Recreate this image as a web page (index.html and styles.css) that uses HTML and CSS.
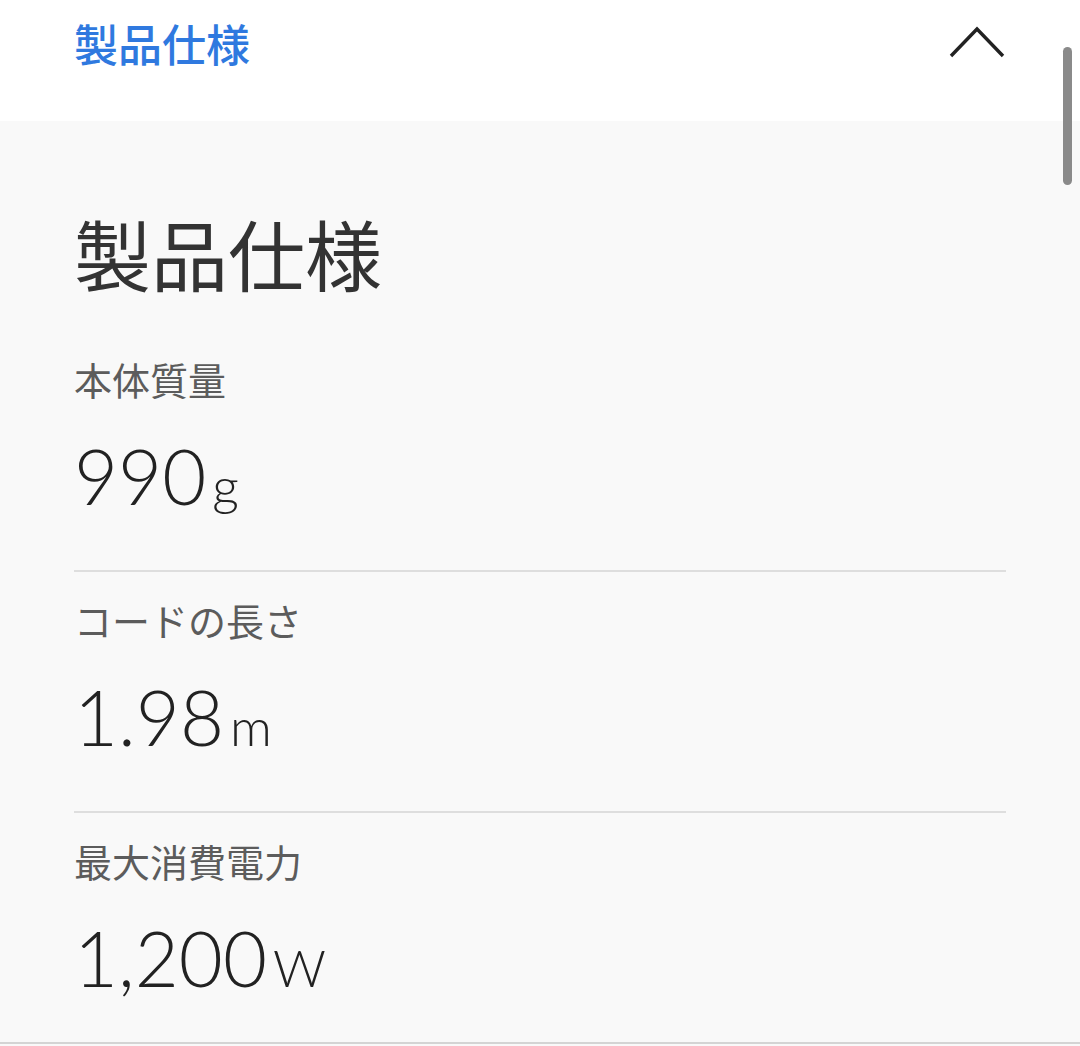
FILE: index.html
```html
<!DOCTYPE html>
<html lang="ja">
<head>
  <meta charset="UTF-8" />
  <title>製品仕様</title>
  <link rel="stylesheet" href="styles.css">
</head>
<body>

  <header class="bar">
    <span class="bar-title">製品仕様</span>
    <svg class="chevron" width="56" height="32" viewBox="0 0 56 32">
      <polyline points="2,30 28,3 54,30" fill="none" stroke="#222" stroke-width="3.4" />
    </svg>
  </header>

  <div class="scroll-thumb"></div>

  <section class="specs">
    <h1>製品仕様</h1>

    <div class="spec">
      <div class="spec-label">本体質量</div>
      <div class="spec-value">990<span class="unit">g</span></div>
    </div>

    <div class="spec">
      <div class="spec-label">コードの長さ</div>
      <div class="spec-value">1.98<span class="unit">m</span></div>
    </div>

    <div class="spec last">
      <div class="spec-label">最大消費電力</div>
      <div class="spec-value">1,200<span class="unit">W</span></div>
    </div>
  </section>

</body>
</html>
```

FILE: styles.css
```css
html, body {
  margin: 0;
  height: 1046px;
  overflow: hidden;
}
body {
  font-family: "Noto Sans CJK JP", "Noto Sans", sans-serif;
  background: #f9f9f9;
  color: #333;
}
.bar {
  background: #fff;
  height: 121px;
  box-sizing: border-box;
  padding: 21px 74px 0 74px;
  display: flex;
  justify-content: space-between;
  align-items: flex-start;
}
.bar-title {
  font-size: 44px;
  line-height: 1;
  font-weight: 500;
  color: #2f79df;
}
.chevron {
  margin-top: 5px;
  margin-right: 1px;
}
.scroll-thumb {
  position: absolute;
  left: 1063px;
  top: 47px;
  width: 9px;
  height: 138px;
  border-radius: 5px;
  background: #8a8a8a;
}
.specs {
  padding: 93px 74px 0 74px;
  height: 923px;
  box-sizing: border-box;
  border-bottom: 2px solid #d4d4d4;
  margin: 0;
}
h1 {
  margin: 0 0 69px 0;
  font-size: 77px;
  line-height: 1;
  font-weight: 400;
  color: #333;
}
.spec {
  border-bottom: 2px solid #dedede;
  padding-bottom: 56px;
  margin-bottom: 29px;
}
.spec.last {
  border-bottom: none;
}
.spec-label {
  font-size: 38px;
  line-height: 1;
  color: #5c5c5c;
  margin-bottom: 40px;
}
.spec-value {
  font-family: Lato, "Open Sans", sans-serif;
  font-weight: 300;
  font-size: 76px;
  line-height: 1;
  color: #222;
}
.unit {
  font-size: 52px;
  margin-left: 6px;
}
```
